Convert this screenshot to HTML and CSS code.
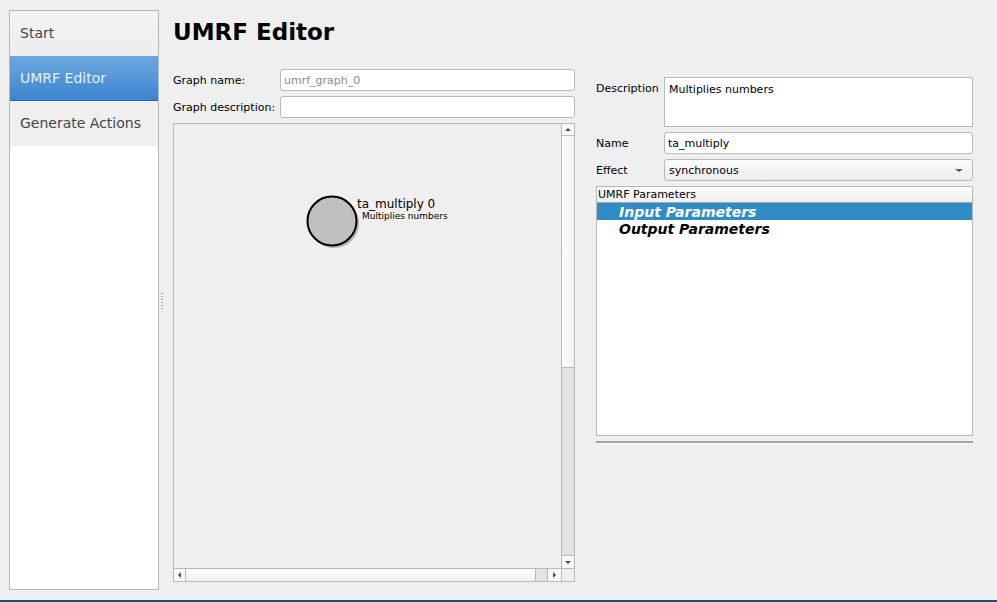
FILE: index.html
```html
<!DOCTYPE html>
<html lang="en">
<head>
    <meta charset="UTF-8">
    <title>UMRF Editor</title>
    <link rel="stylesheet" href="styles.css">
</head>
<body>
    <div class="window">
        <div class="sidebar">
            <div class="nav-item">Start</div>
            <div class="nav-item active">UMRF Editor</div>
            <div class="nav-item">Generate Actions</div>
        </div>

        <div class="splitter"><span class="grip"></span></div>

        <div class="main">
            <h1 class="title">UMRF Editor</h1>

            <div class="columns">
                <div class="graph-column">
                    <div class="form-row">
                        <label class="graph-label">Graph name:</label>
                        <div class="field placeholder">umrf_graph_0</div>
                    </div>
                    <div class="form-row">
                        <label class="graph-label">Graph description:</label>
                        <div class="field"></div>
                    </div>

                    <div class="canvas">
                        <div class="canvas-row">
                            <div class="scene">
                                <div class="node">
                                    <svg width="58" height="58" viewBox="0 0 58 58">
                                        <circle cx="28" cy="28" r="25" fill="#8a8a8a" opacity="0.6"/>
                                        <circle cx="26" cy="26" r="24.5" fill="#c0c0c0" stroke="#000" stroke-width="2"/>
                                    </svg>
                                    <div class="node-text">
                                        <div class="node-name">ta_multiply 0</div>
                                        <div class="node-desc">Multiplies numbers</div>
                                    </div>
                                </div>
                            </div>
                            <div class="vscroll">
                                <div class="sb-btn"><span class="arrow up"></span></div>
                                <div class="vthumb"></div>
                                <div class="track"></div>
                                <div class="sb-btn"><span class="arrow down"></span></div>
                            </div>
                        </div>
                        <div class="hscroll">
                            <div class="sb-btn"><span class="arrow left"></span></div>
                            <div class="hthumb"></div>
                            <div class="track"></div>
                            <div class="sb-btn"><span class="arrow right"></span></div>
                            <div class="corner"></div>
                        </div>
                    </div>
                </div>

                <div class="props-column">
                    <div class="form-row">
                        <label class="prop-label top">Description</label>
                        <div class="field textarea">Multiplies numbers</div>
                    </div>
                    <div class="form-row">
                        <label class="prop-label">Name</label>
                        <div class="field">ta_multiply</div>
                    </div>
                    <div class="form-row">
                        <label class="prop-label">Effect</label>
                        <div class="field combo">
                            <span>synchronous</span>
                            <span class="arrow down"></span>
                        </div>
                    </div>

                    <div class="tree">
                        <div class="tree-header">UMRF Parameters</div>
                        <div class="tree-item selected">Input Parameters</div>
                        <div class="tree-item">Output Parameters</div>
                    </div>

                    <div class="separator"></div>
                </div>
            </div>
        </div>
    </div>
    <div class="status-line"></div>
</body>
</html>
```

FILE: styles.css
```css
* {
    margin: 0;
    padding: 0;
    box-sizing: border-box;
}

body {
    font-family: "DejaVu Sans", sans-serif;
    background-color: #efefef;
    color: #000;
    height: 602px;
    display: flex;
    flex-direction: column;
    overflow: hidden;
}

.window {
    flex: 1;
    display: flex;
    padding: 10px 0 0 9px;
}

/* barre de navigation a gauche */
.sidebar {
    width: 150px;
    height: 580px;
    background-color: #fff;
    border: 1px solid #b8b8b8;
}

.nav-item {
    height: 45px;
    padding-left: 10px;
    padding-bottom: 1px;
    display: flex;
    align-items: center;
    font-size: 14px;
    color: #454545;
    background-color: #efefef;
}

.nav-item:first-child {
    background: linear-gradient(#f3f3f3, #ededed);
}

.nav-item.active {
    background: linear-gradient(#6da8de, #3b85d0);
    border-bottom: 1px solid #2d6aa8;
    color: #e9f1fa;
}

.splitter {
    width: 14px;
    position: relative;
}

.grip {
    position: absolute;
    left: 2px;
    top: 283px;
    width: 2px;
    height: 16px;
    background: repeating-linear-gradient(#a8a8a8 0 1px, transparent 1px 3px);
}

.main {
    flex: 1;
    padding-right: 24px;
}

.title {
    font-size: 23px;
    font-weight: bold;
    line-height: 28px;
    margin-top: 8px;
}

.columns {
    display: flex;
    gap: 21px;
    margin-top: 23px;
}

.graph-column {
    width: 402px;
    display: flex;
    flex-direction: column;
    gap: 5px;
}

.props-column {
    flex: 1;
    margin-top: 8px;
    display: flex;
    flex-direction: column;
    gap: 5px;
}

.form-row {
    display: flex;
    align-items: center;
}

.graph-label {
    width: 107px;
    font-size: 11px;
}

.prop-label {
    width: 68px;
    font-size: 11px;
}

.prop-label.top {
    align-self: flex-start;
    padding-top: 5px;
}

.field {
    flex: 1;
    height: 22px;
    background-color: #fff;
    border: 1px solid #b8b8b8;
    border-radius: 3px;
    font-size: 11px;
    padding: 0 3px;
    display: flex;
    align-items: center;
}

.field.placeholder {
    color: #8c8c8c;
}

.field.textarea {
    height: 50px;
    border-radius: 0;
    align-items: flex-start;
    padding: 5px 4px;
}

.field.combo {
    background: linear-gradient(#fbfbfb, #ececec);
    justify-content: space-between;
    padding: 0 9px 0 4px;
}

/* zone du graphe */
.canvas {
    height: 459px;
    border: 1px solid #b8b8b8;
    display: flex;
    flex-direction: column;
}

.canvas-row {
    flex: 1;
    display: flex;
}

.scene {
    flex: 1;
    position: relative;
    background-color: #efefef;
}

.node {
    position: absolute;
    left: 132px;
    top: 71px;
    display: flex;
    align-items: flex-start;
}

.node-text {
    margin-left: -7px;
    margin-top: 2px;
}

.node-name {
    font-size: 12px;
    line-height: 14px;
}

.node-desc {
    font-size: 9px;
    margin-left: 5px;
}

.vscroll {
    width: 13px;
    display: flex;
    flex-direction: column;
    border-left: 1px solid #b8b8b8;
}

.vthumb {
    height: 232px;
    background: linear-gradient(to right, #fff, #f0f0f0);
    border-bottom: 1px solid #b8b8b8;
}

.track {
    flex: 1;
    background-color: #e3e3e3;
}

.sb-btn {
    width: 12px;
    height: 12px;
    display: flex;
    align-items: center;
    justify-content: center;
    background-color: #f8f8f8;
}

.vscroll .sb-btn:first-child {
    border-bottom: 1px solid #b8b8b8;
    height: 12px;
}

.vscroll .sb-btn:last-child {
    border-top: 1px solid #b8b8b8;
    height: 13px;
}

.hscroll {
    height: 13px;
    display: flex;
    border-top: 1px solid #b8b8b8;
}

.hscroll .sb-btn {
    height: 12px;
}

.hscroll .sb-btn:first-child {
    border-right: 1px solid #b8b8b8;
}

.hthumb {
    width: 350px;
    background: linear-gradient(#fff, #efefef);
    border-right: 1px solid #b8b8b8;
}

.hscroll .track {
    border-right: 1px solid #b8b8b8;
}

.hscroll .sb-btn:nth-child(4) {
    width: 13px;
}

.corner {
    width: 13px;
    border-left: 1px solid #b8b8b8;
    background-color: #efefef;
}

.arrow {
    width: 0;
    height: 0;
    border: 3px solid transparent;
}

.arrow.up {
    border-bottom-color: #4a4a4a;
    border-top-width: 0;
}

.arrow.down {
    border-top-color: #4a4a4a;
    border-bottom-width: 0;
}

.arrow.left {
    border-right-color: #4a4a4a;
    border-left-width: 0;
}

.arrow.right {
    border-left-color: #4a4a4a;
    border-right-width: 0;
}

.combo .arrow.down {
    border-width: 3px 4px 0;
    border-top-color: #555;
}

/* arbre des parametres */
.tree {
    height: 250px;
    background-color: #fff;
    border: 1px solid #b8b8b8;
}

.tree-header {
    height: 16px;
    font-size: 11px;
    padding-left: 1px;
    display: flex;
    align-items: center;
    background: linear-gradient(#fdfdfd, #efefef);
    border-bottom: 1px solid #a8a8a8;
}

.tree-item {
    height: 17px;
    padding-left: 22px;
    font-size: 14px;
    font-weight: bold;
    font-style: italic;
    display: flex;
    align-items: center;
}

.tree-item.selected {
    background-color: #308cc6;
    color: #fff;
}

.separator {
    border-top: 2px solid #a2a2a2;
    border-bottom: 1px solid #fff;
    height: 3px;
}

.status-line {
    height: 2px;
    background-color: #1f4d78;
}
```
